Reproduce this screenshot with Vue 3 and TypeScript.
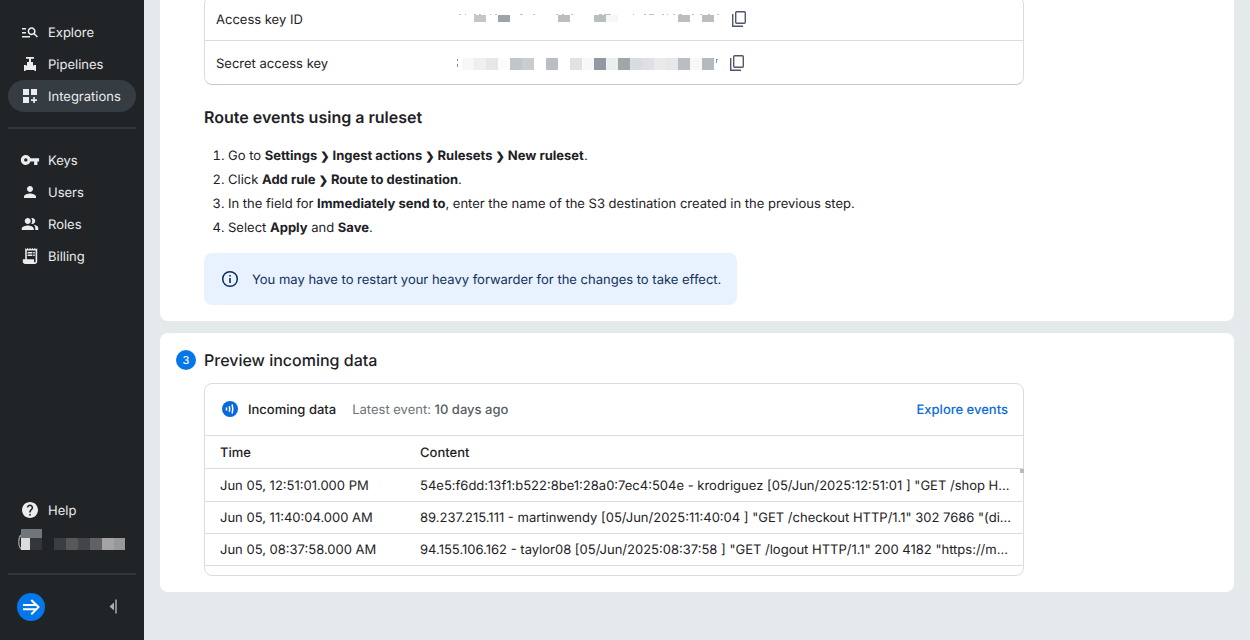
<script setup lang="ts">
interface NavItem {
  label: string
  icon: string
  transform: string
  active?: boolean
}

interface Block {
  x: number
  fill: string
}

const primaryNav: NavItem[] = [
  {
    label: 'Explore',
    transform: 'translate(.4 .4) scale(.8)',
    icon: 'M7 9H2V7h5v2zm0 3H2v2h5v-2zm13.59 7l-3.83-3.83c-.8.52-1.74.83-2.76.83-2.76 0-5-2.24-5-5s2.24-5 5-5 5 2.24 5 5c0 1.02-.31 1.96-.83 2.75L22 17.59 20.59 19zM17 11c0-1.65-1.35-3-3-3s-3 1.35-3 3 1.35 3 3 3 3-1.35 3-3zM2 19h10v-2H2v2z',
  },
  {
    label: 'Pipelines',
    transform: '',
    icon: 'M6 3h8v1.700h-3V8h2v3.500h1V11h2v6h-1.600v-.9H5.600V17H4v-6h2v.5h1V8h2V4.700H6z',
  },
  {
    label: 'Integrations',
    transform: '',
    icon: 'M3 3h6v6H3zM11 3h6v6h-6zM3 11h6v6H3zM13.200 11h1.700v2.200H17v1.700h-2.100V17h-1.700v-2.100H11v-1.700h2.200z',
    active: true,
  },
]

const accountNav: NavItem[] = [
  {
    label: 'Keys',
    transform: 'scale(.83)',
    icon: 'M12.65 10C11.83 7.67 9.61 6 7 6c-3.31 0-6 2.69-6 6s2.69 6 6 6c2.61 0 4.83-1.67 5.65-4H17v4h4v-4h2v-4H12.65zM7 14c-1.1 0-2-.9-2-2s.9-2 2-2 2 .9 2 2-.9 2-2 2z',
  },
  {
    label: 'Users',
    transform: 'translate(1 1) scale(.75)',
    icon: 'M12 12c2.21 0 4-1.79 4-4s-1.79-4-4-4-4 1.79-4 4 1.79 4 4 4zm0 2c-2.67 0-8 1.34-8 4v2h16v-2c0-2.66-5.33-4-8-4z',
  },
  {
    label: 'Roles',
    transform: 'translate(1 1) scale(.75)',
    icon: 'M16.67 13.13C18.04 14.06 19 15.32 19 17v3h4v-3c0-2.18-3.57-3.47-6.33-3.87zM15 12c2.21 0 4-1.79 4-4s-1.79-4-4-4c-.47 0-.91.1-1.33.24C14.5 5.27 15 6.58 15 8s-.5 2.73-1.33 3.76c.42.14.86.24 1.33.24zM9 12c2.21 0 4-1.79 4-4s-1.79-4-4-4-4 1.79-4 4 1.79 4 4 4zM9 14c-2.67 0-8 1.34-8 4v2h16v-2c0-2.66-5.33-4-8-4z',
  },
  {
    label: 'Billing',
    transform: 'translate(.4 .4) scale(.8)',
    icon: 'M19.500 3.500L18 2l-1.500 1.500L15 2l-1.500 1.500L12 2l-1.500 1.500L9 2 7.500 3.500 6 2v14H3v3c0 1.660 1.340 3 3 3h12c1.660 0 3-1.340 3-3V2l-1.500 1.500zM19 19c0 .55-.45 1-1 1s-1-.45-1-1v-3H8V5h11v14zM9 7h6v2H9zM16 7h2v2h-2zM9 10h6v2H9zM16 10h2v2h-2z',
  },
]

const helpIcon =
  'M12 2C6.480 2 2 6.480 2 12s4.480 10 10 10 10-4.480 10-10S17.520 2 12 2zm1 17h-2v-2h2v2zm2.070-7.750l-.9.92C13.450 12.900 13 13.500 13 15h-2v-.5c0-1.100.45-2.100 1.170-2.830l1.240-1.260c.37-.36.59-.86.59-1.410 0-1.100-.9-2-2-2s-2 .9-2 2H8c0-2.210 1.790-4 4-4s4 1.790 4 4c0 .88-.36 1.680-.93 2.250z'

const keyIdBlocks: Block[] = [
  { x: 18, fill: '#c3c7ca' },
  { x: 42, fill: '#9fa4a8' },
  { x: 102, fill: '#babec1' },
  { x: 138, fill: '#babec1' },
  { x: 150, fill: '#f6f8f8' },
  { x: 222, fill: '#babec1' },
  { x: 246, fill: '#babec1' },
]

// Tips of the masked characters: offset and width
const keyIdTips: number[][] = [
  [3, 2], [9, 1], [18, 2], [23, 2], [34, 1], [39, 2], [64, 3], [77, 2],
  [100, 2], [106, 2], [115, 2], [143, 3], [148, 7], [177, 1], [188, 2],
  [193, 5], [206, 2], [211, 1], [217, 2], [223, 3], [236, 2], [244, 2], [252, 2], [261, 2],
]

const secretBlocks: Block[] = [
  { x: 6, fill: '#f7f7f8' },
  { x: 18, fill: '#edeff1' },
  { x: 30, fill: '#e5e7e9' },
  { x: 42, fill: '#fbfdfd' },
  { x: 54, fill: '#c2c6ca' },
  { x: 66, fill: '#cbccd1' },
  { x: 90, fill: '#babec2' },
  { x: 114, fill: '#e1e2e5' },
  { x: 126, fill: '#f8f8f8' },
  { x: 138, fill: '#9498a2' },
  { x: 150, fill: '#edeeee' },
  { x: 162, fill: '#a1a6ab' },
  { x: 174, fill: '#d9dddf' },
  { x: 186, fill: '#e0e0e4' },
  { x: 198, fill: '#e9eaec' },
  { x: 210, fill: '#e5e7ea' },
  { x: 222, fill: '#babec2' },
  { x: 234, fill: '#f7f9f9' },
  { x: 246, fill: '#b4b9bd' },
]

const userBlocks: Block[] = [
  { x: 36, fill: '#3b3e41' },
  { x: 48, fill: '#58585b' },
  { x: 60, fill: '#434649' },
  { x: 72, fill: '#626264' },
  { x: 84, fill: '#a3a3a4' },
  { x: 96, fill: '#979899' },
]

const events = [
  {
    time: 'Jun 05, 12:51:01.000 PM',
    content: '54e5:f6dd:13f1:b522:8be1:28a0:7ec4:504e - krodriguez [05/Jun/2025:12:51:01 ] "GET /shop H…',
  },
  {
    time: 'Jun 05, 11:40:04.000 AM',
    content: '89.237.215.111 - martinwendy [05/Jun/2025:11:40:04 ] "GET /checkout HTTP/1.1" 302 7686 "(di…',
  },
  {
    time: 'Jun 05, 08:37:58.000 AM',
    content: '94.155.106.162 - taylor08 [05/Jun/2025:08:37:58 ] "GET /logout HTTP/1.1" 200 4182 "https://m…',
  },
]
</script>

<template>
  <div class="shell">
    <aside class="sidebar">
      <nav class="nav">
        <a v-for="item in primaryNav" :key="item.label" href="#" class="nav-item" :class="{ active: item.active }">
          <svg class="nav-icon" viewBox="0 0 20 20"><path :d="item.icon" :transform="item.transform" fill="currentColor" /></svg>
          <span class="label">{{ item.label }}</span>
        </a>
      </nav>
      <hr class="rule" />
      <nav class="nav">
        <a v-for="item in accountNav" :key="item.label" href="#" class="nav-item">
          <svg class="nav-icon" viewBox="0 0 20 20"><path :d="item.icon" :transform="item.transform" fill="currentColor" /></svg>
          <span class="label">{{ item.label }}</span>
        </a>
      </nav>
      <div class="sidebar-end">
        <a href="#" class="nav-item">
          <svg class="nav-icon" viewBox="0 0 20 20"><path :d="helpIcon" transform="translate(.4 .4) scale(.8)" fill="currentColor" /></svg>
          <span class="label">Help</span>
        </a>
        <button class="user" type="button" aria-label="Account">
          <svg width="108" height="24" viewBox="0 0 108 24">
            <path d="M3 7C0 10 0 18 3 21" fill="none" stroke="#9aa1ad" stroke-width="1.2" />
            <rect x="3" y="1" width="21" height="9" fill="#70777c" />
            <rect x="3" y="10" width="9" height="12" fill="#dcdcdc" />
            <rect x="12" y="10" width="12" height="12" fill="#343639" />
            <rect v-for="b in userBlocks" :key="b.x" :x="b.x" y="10" :width="b.x === 96 ? 11 : 12" height="12" :fill="b.fill" />
          </svg>
        </button>
        <hr class="rule" />
        <div class="footer">
          <a href="#" class="brand" aria-label="Home">
            <svg width="28" height="28" viewBox="0 0 28 28">
              <circle cx="14" cy="14" r="14" fill="#0577e8" />
              <path d="M6 12h14M6 16.200h14M14.300 7l7.200 7.100-7.200 7.100" fill="none" stroke="#fff" stroke-width="2" />
            </svg>
          </a>
          <button class="collapse" type="button" aria-label="Collapse sidebar">
            <svg width="10" height="16" viewBox="0 0 10 16">
              <path d="M6 3.500v8L1.500 7.500z" fill="#a9afb8" />
              <path d="M8 .5v14" stroke="#a9afb8" stroke-width="1.500" />
            </svg>
          </button>
        </div>
      </div>
    </aside>

    <main class="main">
      <section class="card first">
        <dl class="keys">
          <div class="key-row">
            <dt>Access key ID</dt>
            <dd>
              <svg width="266" height="16" viewBox="0 0 266 16">
                <rect v-for="t in keyIdTips" :key="t[0]" :x="t[0]" y="3" :width="t[1]" height="1" fill="#bfc1c3" />
                <rect v-for="b in keyIdBlocks" :key="b.x" :x="b.x" y="4" width="12" height="7" :fill="b.fill" />
              </svg>
              <button class="copy" type="button" aria-label="Copy access key ID">
                <svg width="16" height="18" viewBox="0 0 16 18">
                  <rect x="5.700" y="1.700" width="9.600" height="11.600" rx="1" fill="none" stroke="#4e5866" stroke-width="1.400" />
                  <path d="M2.700 4v12.300H13" fill="none" stroke="#4e5866" stroke-width="1.400" />
                </svg>
              </button>
            </dd>
          </div>
          <div class="key-row">
            <dt>Secret access key</dt>
            <dd>
              <svg width="264" height="16" viewBox="0 0 264 16">
                <path d="M1.500 4v2M1.500 9v3" stroke="#8d9196" />
                <rect v-for="b in secretBlocks" :key="b.x" :x="b.x" y="3" width="12" height="12" :fill="b.fill" />
                <path d="M260 4.500h2M260.500 4v4" stroke="#8d9196" />
              </svg>
              <button class="copy" type="button" aria-label="Copy secret access key">
                <svg width="16" height="18" viewBox="0 0 16 18">
                  <rect x="5.700" y="1.700" width="9.600" height="11.600" rx="1" fill="none" stroke="#4e5866" stroke-width="1.400" />
                  <path d="M2.700 4v12.300H13" fill="none" stroke="#4e5866" stroke-width="1.400" />
                </svg>
              </button>
            </dd>
          </div>
        </dl>

        <h2 class="subhead">Route events using a ruleset</h2>
        <ol class="steps">
          <li>Go to <b>Settings <span class="sep">❯</span> Ingest actions <span class="sep">❯</span> Rulesets <span class="sep">❯</span> New ruleset</b>.</li>
          <li>Click <b>Add rule <span class="sep">❯</span> Route to destination</b>.</li>
          <li>In the field for <b>Immediately send to</b>, enter the name of the S3 destination created in the previous step.</li>
          <li>Select <b>Apply</b> and <b>Save</b>.</li>
        </ol>
        <p class="note">
          <svg width="20" height="20" viewBox="0 0 20 20">
            <circle cx="10" cy="10" r="7.300" fill="none" stroke="#0c2d5b" stroke-width="1.500" />
            <path d="M10 9v5M10 6v1.600" stroke="#0c2d5b" stroke-width="1.600" />
          </svg>
          <span class="label">You may have to restart your heavy forwarder for the changes to take effect.</span>
        </p>
      </section>

      <section class="card second">
        <header class="step-head">
          <span class="badge">3</span>
          <h2>Preview incoming data</h2>
        </header>
        <div class="panel">
          <div class="panel-head">
            <svg width="20" height="20" viewBox="0 0 20 20">
              <circle cx="10" cy="10" r="8" fill="#0968da" />
              <path d="M6.500 8.600v2.800M9.300 7.200q.9 2.800 0 5.600M12.100 5.600q1.400 4.400 0 8.800" fill="none" stroke="#fff" stroke-width="1.500" />
            </svg>
            <h3 class="label">Incoming data</h3>
            <span class="label latest">Latest event: <span class="ago">10 days ago</span></span>
            <a href="#" class="label explore">Explore events</a>
          </div>
          <div class="table-wrap">
            <table class="events">
              <thead>
                <tr><th class="time" scope="col">Time</th><th scope="col">Content</th></tr>
              </thead>
              <tbody>
                <tr v-for="e in events" :key="e.time">
                  <td>{{ e.time }}</td>
                  <td>{{ e.content }}</td>
                </tr>
              </tbody>
            </table>
            <i class="thumb"></i>
          </div>
        </div>
      </section>
    </main>
  </div>
</template>

<style>
body {
  margin: 0;
  background: #e4e9eb;
}
</style>

<style scoped>
.shell {
  display: flex;
  min-height: 100vh;
  font: 13px/20px Inter, "Liberation Sans", sans-serif;
  color: #1d2125;
  text-rendering: geometricPrecision;
}
.shell *,
.shell {
  box-sizing: border-box;
}
button {
  padding: 0;
  border: 0;
  background: none;
  font: inherit;
  cursor: pointer;
}
svg {
  display: block;
  flex: none;
}
h2,
h3 {
  margin: 0;
}
.label {
  padding-top: 1px;
}
.sidebar {
  flex: none;
  width: 144px;
  padding: 16px 8px 0;
  display: flex;
  flex-direction: column;
  background: #202427;
}
.nav {
  display: flex;
  flex-direction: column;
}
.nav-item {
  display: flex;
  align-items: center;
  gap: 8px;
  height: 32px;
  padding: 0 12px;
  border-radius: 16px;
  color: #ececec;
  text-decoration: none;
}
.nav-item.active {
  background: #353c42;
}
.nav-icon {
  width: 20px;
  height: 20px;
}
.rule {
  width: 100%;
  height: 2px;
  margin: 15px 0;
  border: 0;
  background: #31363b;
}
.sidebar-end {
  margin-top: auto;
}
.sidebar-end .rule {
  margin: 21px 0 0;
}
.user {
  display: block;
  margin: 2px 0 0 10px;
}
.footer {
  display: flex;
  align-items: center;
  justify-content: space-between;
  height: 65px;
  padding: 0 18px 2px 9px;
}
.main {
  flex: 1;
  min-width: 0;
  padding: 0 16px 48px;
}
.card {
  padding: 0 16px 16px 44px;
  border-radius: 8px;
  background: #fff;
}
.card.first {
  display: flow-root;
  border-radius: 0 0 8px 8px;
}
.card.second {
  margin-top: 12px;
  padding-top: 16px;
}
.keys {
  max-width: 820px;
  margin: -4px 0 0;
  border: 1px solid #d9dde2;
  border-bottom-color: #c3ccd5;
  border-radius: 8px;
}
.key-row {
  display: flex;
  align-items: center;
  height: 44px;
  padding-left: 11px;
  border-bottom: 1px solid #d9dde2;
}
.key-row:last-child {
  height: 43px;
  border-bottom: 0;
}
.key-row dt {
  width: 240px;
  padding-top: 2px;
}
.key-row dd {
  display: flex;
  align-items: center;
  gap: 8px;
  margin: 0;
}
.subhead {
  margin-top: 20px;
  font-size: 16px;
  line-height: 24px;
  font-weight: 600;
}
.steps {
  margin: 15px 0 13px;
  padding-left: 24px;
  line-height: 24px;
}
.steps b {
  font-weight: 700;
}
.sep {
  font-size: 11px;
  line-height: 1;
}
.note {
  display: flex;
  align-items: center;
  gap: 12px;
  width: fit-content;
  height: 52px;
  margin: 0;
  padding: 0 16px;
  border-radius: 8px;
  background: #e8f2ff;
  color: #12305c;
}
.step-head {
  display: flex;
  align-items: center;
  gap: 8px;
  margin-left: -28px;
}
.step-head h2 {
  font-size: 16px;
  line-height: 22px;
  font-weight: 500;
}
.badge {
  width: 20px;
  height: 20px;
  border-radius: 50%;
  background: #0577e8;
  color: #fff;
  font-size: 11px;
  font-weight: 500;
  text-align: center;
}
.panel {
  max-width: 820px;
  margin-top: 12px;
  padding-bottom: 9px;
  border: 1px solid #d9dde2;
  border-radius: 8px;
}
.panel-head {
  display: flex;
  align-items: center;
  height: 52px;
  padding: 0 15px 1px;
  border-bottom: 1px solid #d9dde2;
}
.panel-head h3 {
  margin-left: 8px;
  font-size: 13px;
  font-weight: 500;
}
.latest {
  margin-left: 16px;
  color: #6b7178;
}
.ago {
  color: #565c63;
  font-weight: 500;
}
.explore {
  margin-left: auto;
  color: #0a6bda;
  font-weight: 500;
  text-decoration: none;
}
.table-wrap {
  position: relative;
}
.events {
  width: 100%;
  table-layout: fixed;
  border-collapse: separate;
  border-spacing: 0;
}
.events th,
.events td {
  padding: 6px 12px 5px 15px;
  border-bottom: 1px solid #d9dde2;
  text-align: left;
  white-space: nowrap;
}
.events th,
.events tbody tr:first-child td {
  padding-top: 7px;
}
.events th {
  font-weight: 500;
}
.events .time {
  width: 200px;
}
.thumb {
  position: absolute;
  top: 33px;
  right: -1px;
  width: 4px;
  height: 4px;
  background: #b9bbbd;
}
</style>
